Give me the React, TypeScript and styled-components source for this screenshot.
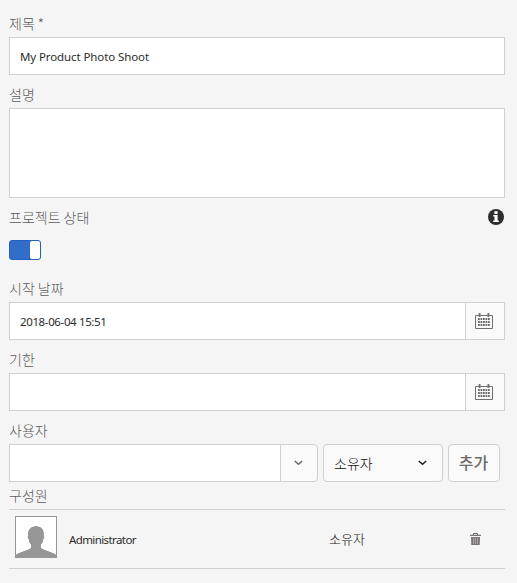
import React from "react";
import styled, { createGlobalStyle } from "styled-components";

const Global = createGlobalStyle`
  * { box-sizing: border-box; }
  body { margin: 0; background: #f5f5f5; }
  input, textarea, button { font: inherit; color: inherit; margin: 0; outline: none; }
`;

const Form = styled.main`
  width: 517px;
  height: 583px;
  padding: 10px 12px 0 9px;
  background: #f5f5f5;
  color: #2c2c2c;
  font-family: "Noto Sans", "Noto Sans CJK KR", sans-serif;
  font-size: 11.5px;
  overflow: hidden;
`;

const Label = styled.label<{ $height?: number; $bottom?: number }>`
  display: flex;
  justify-content: space-between;
  align-items: center;
  height: ${(p) => p.$height ?? 27}px;
  padding-bottom: ${(p) => p.$bottom ?? 2}px;
  color: #5c5c5c;
  font-family: "Noto Sans CJK KR", sans-serif;
  font-size: 14px;
  font-weight: 300;
  line-height: 20px;
  white-space: pre;
`;

const Required = styled.span`
  flex: 1;
  padding-top: 2px;
  font-size: 15px;
  letter-spacing: -0.5px;
`;

const Field = styled.section<{ $gap?: number }>`
  margin-bottom: ${(p) => p.$gap ?? 6}px;
`;

const TextInput = styled.input<{ $spacing?: number }>`
  display: block;
  flex: 1;
  width: 100%;
  min-width: 0;
  height: 38px;
  padding: 0 10px;
  border: 1px solid #d0d0d0;
  border-radius: 0;
  background: #fff;
  letter-spacing: ${(p) => p.$spacing ?? 0}px;
`;

const TextArea = styled.textarea`
  display: block;
  width: 100%;
  height: 90px;
  border: 1px solid #d0d0d0;
  background: #fff;
  resize: none;
`;

const Toggle = styled.button`
  display: flex;
  justify-content: flex-end;
  width: 32px;
  height: 20px;
  padding: 0;
  border: 1px solid #2062bd;
  border-radius: 3px;
  background: #326ec8;
`;

const Knob = styled.span`
  width: 10px;
  height: 18px;
  border-radius: 2px;
  background: #fff;
`;

const Group = styled.div<{ $width?: number }>`
  display: flex;
  width: ${(p) => (p.$width ? `${p.$width}px` : "100%")};
`;

const Addon = styled.button<{ $width: number; $rounded?: boolean }>`
  display: flex;
  align-items: center;
  justify-content: center;
  width: ${(p) => p.$width}px;
  height: 38px;
  margin-left: -1px;
  padding: 0 2px 0 0;
  border: 1px solid #d0d0d0;
  border-radius: ${(p) => (p.$rounded ? "0 4px 4px 0" : "0")};
  background: #fafafa;
`;

const UserRow = styled.div`
  display: flex;
  gap: 5px;
`;

const Select = styled.button`
  display: flex;
  align-items: center;
  justify-content: space-between;
  width: 120px;
  height: 38px;
  padding: 0 15px 1px 10px;
  border: 1px solid #d0d0d0;
  border-radius: 4px;
  background: #fafafa;
  color: #111;
  font-family: "Noto Sans CJK KR", sans-serif;
  font-size: 14px;
  font-weight: 300;
`;

const AddButton = styled.button`
  width: 52px;
  height: 38px;
  padding: 0 1px 2px 0;
  border: 1px solid #d0d0d0;
  border-radius: 4px;
  background: #fafafa;
  color: #6b6b6b;
  font-family: "Noto Sans CJK KR", sans-serif;
  font-size: 16px;
  font-weight: 500;
  line-height: 34px;
`;

const Member = styled.div`
  display: grid;
  grid-template-columns: 60px 260px 1fr 11px;
  align-items: center;
  height: 60px;
  padding: 0 24px 0 0;
  border-top: 1px solid #d0d0d0;
  border-bottom: 1px solid #d0d0d0;
`;

const Avatar = styled.svg`
  width: 42px;
  height: 42px;
  margin: 0 0 4px 6px;
`;

const Name = styled.span`
  letter-spacing: -0.6px;
`;

const Role = styled.span`
  padding-bottom: 2px;
  color: #111;
  font-family: "Noto Sans CJK KR", sans-serif;
  font-size: 13px;
  font-weight: 300;
`;

const Chevron = ({ color }: { color: string }) => (
  <svg width="9" height="6" viewBox="0 0 9 6" fill="none" stroke={color} strokeWidth="1.6">
    <path d="M.8 1 L4.500 4.300 L8.200 1" />
  </svg>
);

const Calendar = () => (
  <svg width="18" height="16" viewBox="0 0 18 16">
    <path d="M.5 2.500h17v13H.5z" fill="none" stroke="#6e6e6e" />
    <path d="M3.700 0h1.800v4H3.700z M12.500 0h1.800v4h-1.800z" fill="#6e6e6e" />
    {[5, 8, 11].map((y) =>
      [3, 5.500, 8, 10.500, 13].map((x) => (
        <rect key={`${x}-${y}`} x={x} y={y} width="1.800" height="2" fill="#6e6e6e" />
      ))
    )}
  </svg>
);

const InfoIcon = styled.svg`
  width: 16px;
  height: 16px;
  margin-right: 1.5px;
`;

const Info = () => (
  <InfoIcon viewBox="0 0 16 16">
    <circle cx="8" cy="8" r="8" fill="#2e2e2e" />
    <path d="M6.400 2.300h3.200v2.700h-3.200z M5.300 6h4.300v5.500h1.200V13H5.200v-1.500h1.300v-4H5.300z" fill="#fff" />
  </InfoIcon>
);

const Trash = () => (
  <svg width="11" height="12" viewBox="0 0 11 12">
    <path d="M3.500 2V.5h4V2" fill="none" stroke="#6b6b6b" />
    <path d="M0 1.800h11V3H0z M1 4h9l-.3 8H1.300z" fill="#7a7474" />
    <path d="M3.500 5v6 M5.500 5v6 M7.500 5v6" stroke="#c4bcbc" strokeWidth=".7" />
  </svg>
);

export default function App() {
  return (
    <>
      <Global />
      <Form>
        <Field>
          <Label>제목<Required> *</Required></Label>
          <TextInput $spacing={-0.1} defaultValue="My Product Photo Shoot" />
        </Field>
        <Field>
          <Label>설명</Label>
          <TextArea />
        </Field>
        <Field $gap={15}>
          <Label $height={36} $bottom={10}>
            프로젝트 상태
            <Info />
          </Label>
          <Toggle aria-label="프로젝트 상태">
            <Knob />
          </Toggle>
        </Field>
        <Field>
          <Label>시작 날짜</Label>
          <Group>
            <TextInput $spacing={-0.37} defaultValue="2018-06-04 15:51" />
            <Addon $width={40}><Calendar /></Addon>
          </Group>
        </Field>
        <Field>
          <Label>기한</Label>
          <Group>
            <TextInput />
            <Addon $width={40}><Calendar /></Addon>
          </Group>
        </Field>
        <Field $gap={0}>
          <Label>사용자</Label>
          <UserRow>
            <Group $width={309}>
              <TextInput />
              <Addon $width={38} $rounded><Chevron color="#6b6b6b" /></Addon>
            </Group>
            <Select>소유자<Chevron color="#222" /></Select>
            <AddButton>추가</AddButton>
          </UserRow>
        </Field>
        <Label>구성원</Label>
        <Member>
          <Avatar viewBox="0 0 42 42">
            <path d="M1 41v-2.500c4-2.500 9-4 13-5.500 2-.8 2.300-2 2-4-1.500-1.500-2-3-2.300-5.500-1.200-.5-1.500-3.500-.6-4.500-.8-5 2.400-9 8-9s8.600 4 7.800 9c.9 1 .6 4-.6 4.500-.3 2.500-.8 4-2.300 5.500-.3 2 0 3.200 2 4 4 1.500 9 3 13 5.500V41z" fill="#969696" />
            <path d="M0 0h42v42H0z M1 1v40h40V1z" fill="#969696" fillRule="evenodd" />
            <path d="M1 1h40v37.500c-4-2.500-9-4-13-5.500-2-.8-2.300-2-2-4 1.500-1.500 2-3 2.300-5.500 1.200-.5 1.500-3.500.6-4.500.8-5-2.200-9-7.800-9s-8.800 4-8 9c-.9 1-.6 4 .6 4.500.3 2.500.8 4 2.300 5.500.3 2 0 3.200-2 4-4 1.500-9 3-13 5.500z" fill="#fff" />
          </Avatar>
          <Name>Administrator</Name>
          <Role>소유자</Role>
          <Trash />
        </Member>
      </Form>
    </>
  );
}
